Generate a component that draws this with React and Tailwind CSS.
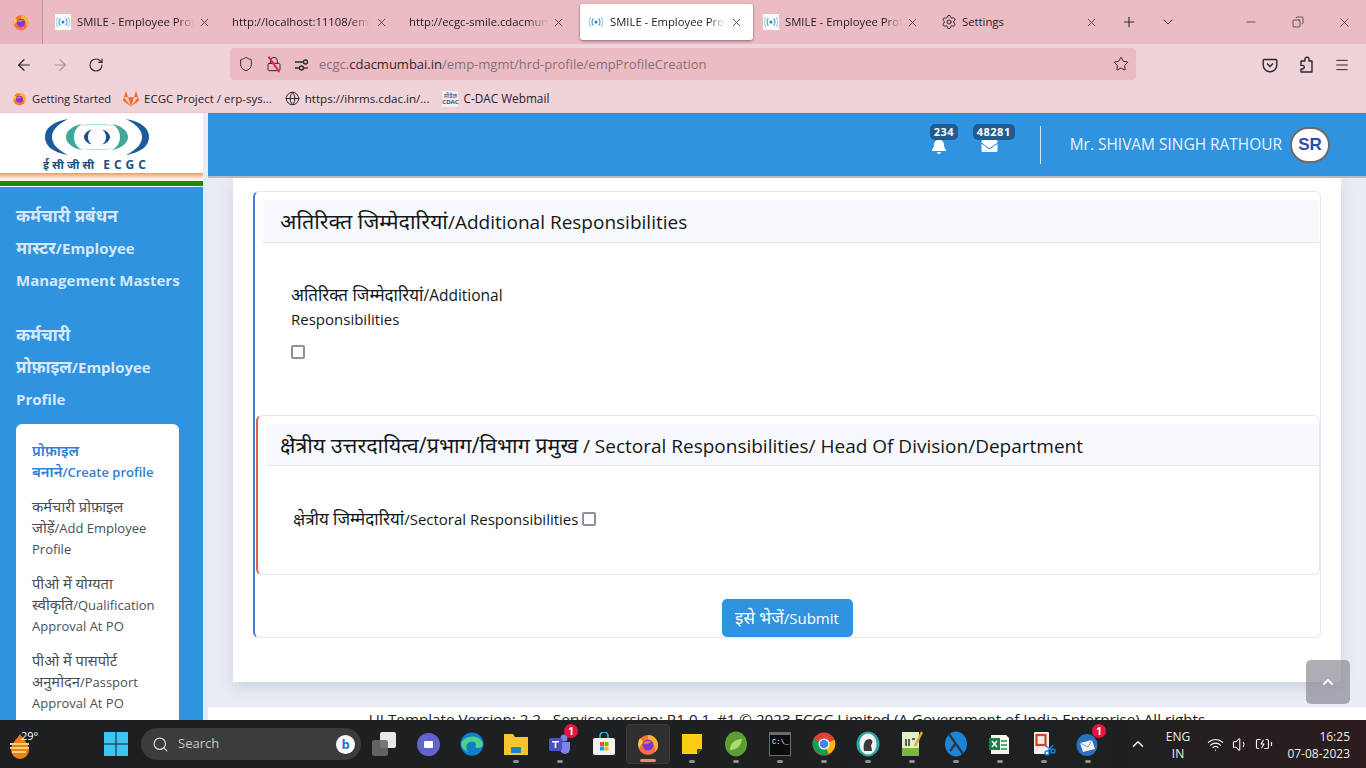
import { ArrowLeft, ArrowRight, RotateCw, Shield, Lock, Star, Menu, Settings, X, Plus, ChevronDown, Minus, Copy, Globe, Search, Wifi, Volume1, BatteryCharging, ChevronUp } from "lucide-react";
import { FaBell, FaEnvelope, FaChevronUp, FaGitlab } from "react-icons/fa";

// Devanagari runs render larger than the latin text next to them
function Hi({ children }) {
  return <span className="text-[1.13em] leading-none">{children}</span>;
}

function Favicon() {
  return (
    <svg width="16" height="16" viewBox="0 0 16 16" className="shrink-0 bg-white">
      <circle cx="8" cy="8" r="1.6" fill="#2f7fb8" />
      <path d="M5.4 4.5a5 5 0 0 0 0 7M10.6 4.5a5 5 0 0 1 0 7" fill="none" stroke="#4aa3d8" strokeWidth="1.2" />
      <path d="M3 3a8 8 0 0 0 0 10M13 3a8 8 0 0 1 0 10" fill="none" stroke="#9cc9e6" strokeWidth="1.2" />
    </svg>
  );
}

function FirefoxIcon({ size = 20 }) {
  return (
    <svg width={size} height={size} viewBox="0 0 24 24" className="shrink-0">
      <circle cx="12" cy="13" r="10" fill="#ff7139" />
      <path d="M12 3c5 0 10 4 10 10 0 3-1 5-3 7 1-6-2-11-7-12z" fill="#ffb32c" />
      <path d="M4 6c-2 3-2 7-1 10l4-6z" fill="#ffcf3d" />
      <circle cx="12" cy="13" r="5.5" fill="#7b3ad6" />
      <path d="M7 11c2-2 6-3 9-1-2 0-3 1-4 2-2 0-3 0-5-1z" fill="#ff7139" />
    </svg>
  );
}

function Tab({ title, active, favicon = true }) {
  return (
    <div className={`h-[36px] flex items-center shrink-0 ${active ? "w-[173px] ml-[2px] mr-[2px] pl-2 pr-[10px] rounded-[3px] bg-white shadow-[0_1px_3px_rgba(0,0,0,0.45)]" : "w-[177px] pl-2 pr-[13px]"}`}>
      {favicon && <Favicon />}
      <span className={`text-[11.3px] text-[#1e1b26] whitespace-nowrap overflow-hidden flex-1 [mask-image:linear-gradient(to_right,black_85%,transparent)] ${favicon ? "ml-[6px]" : ""}`}>{title}</span>
      <X className="w-[13px] h-[13px] ml-1 text-[#3a3640] shrink-0" strokeWidth={1.5} />
    </div>
  );
}

function Bookmark({ icon, label, className = "", textClass = "text-[11.2px]" }) {
  return (
    <div className={`flex items-center gap-[5px] ${className}`}>
      {icon}
      <span className={`${textClass} text-[#23202a] whitespace-nowrap`}>{label}</span>
    </div>
  );
}

function BrowserChrome() {
  return (
    <>
      <div className="h-[44px] bg-[#ecbcc4] flex items-center">
        <div className="w-[43px] h-[44px] flex items-center justify-center border-r border-[#b79aa2] bg-[#e9b4bd]">
          <FirefoxIcon size={18} />
        </div>
        <div className="w-1" />
        <Tab title="SMILE - Employee Profile" />
        <Tab title="http://localhost:11108/emp-mgmt" favicon={false} />
        <Tab title="http://ecgc-smile.cdacmumbai.in" favicon={false} />
        <Tab title="SMILE - Employee Profile" active />
        <Tab title="SMILE - Employee Profile" />
        <div className="w-[166px] flex items-center pl-[9px] shrink-0">
          <Settings className="w-4 h-4 text-[#2b2830]" strokeWidth={1.5} />
          <span className="text-[11.3px] ml-[5px] text-[#1e1b26] flex-1">Settings</span>
          <X className="w-[13px] h-[13px] text-[#3a3640]" strokeWidth={1.5} />
        </div>
        <Plus className="w-4 h-4 ml-[23px] text-[#2b2830]" strokeWidth={1.6} />
        <ChevronDown className="w-4 h-4 ml-[23px] text-[#2b2830]" strokeWidth={1.5} />
        <Minus className="w-[14px] h-[14px] ml-[68px] text-[#2b2830]" strokeWidth={1.2} />
        <Copy className="w-[12px] h-[12px] ml-[34px] -scale-x-100 text-[#2b2830]" strokeWidth={1.4} />
        <X className="w-[15px] h-[15px] ml-[33px] text-[#2b2830]" strokeWidth={1.1} />
      </div>
      <div className="h-[42px] bg-[#f0d3d9] flex items-center pl-[15px] pr-4">
        <ArrowLeft className="w-[18px] h-[18px] text-[#2b2830]" strokeWidth={1.6} />
        <ArrowRight className="w-[18px] h-[18px] ml-[18px] text-[#a8969c]" strokeWidth={1.6} />
        <RotateCw className="w-4 h-4 ml-[19px] text-[#2b2830]" strokeWidth={1.7} />
        <div className="w-[906px] h-[32px] ml-[126px] mb-[2px] bg-[#ecbcc4] rounded-[4px] flex items-center pl-[8px] pr-[7px]">
          <Shield className="w-4 h-4 text-[#2b2830]" strokeWidth={1.5} />
          <div className="relative ml-[12px]">
            <Lock className="w-4 h-4 text-[#2b2830]" strokeWidth={1.5} />
            <div className="absolute left-[7px] top-[-1px] h-[19px] w-[1.5px] bg-[#e22850] -rotate-[35deg]" />
          </div>
          <svg width="15" height="15" viewBox="0 0 15 15" className="ml-[12px]" fill="none" stroke="#2b2830" strokeWidth="1.3">
            <path d="M1 5h8M1 11h4" />
            <circle cx="11.5" cy="5" r="2" />
            <circle cx="7.5" cy="11" r="2" />
            <path d="M10 11h4" />
          </svg>
          <span className="ml-[10px] pt-[2px] text-[13px] text-[#84727a] flex-1 whitespace-nowrap">
            ecgc.<span className="text-[#2b2830]">cdacmumbai.in</span>/emp-mgmt/hrd-profile/empProfileCreation
          </span>
          <Star className="w-4 h-4 text-[#2b2830]" strokeWidth={1.5} />
        </div>
        <svg width="16" height="16" viewBox="0 0 16 16" className="ml-[126px]" fill="none" stroke="#2b2830" strokeWidth="1.4">
          <path d="M2 2.5h12a.8.8 0 0 1 .8.8V8a6.8 6.8 0 0 1-13.6 0V3.3a.8.8 0 0 1 .8-.8z" />
          <path d="M5 6.5l3 3 3-3" />
        </svg>
        <svg width="16" height="18" viewBox="0 0 16 18" className="ml-[20px]" fill="none" stroke="#2b2830" strokeWidth="1.4" strokeLinejoin="round">
          <path d="M3 5h4V3.2a2 2 0 0 1 4 0V5h3v11H3v-3h1.4a1.8 1.8 0 0 0 0-3.6H3z" />
        </svg>
        <Menu className="w-4 h-4 ml-[20px] text-[#2b2830]" strokeWidth={1.5} />
      </div>
      <div className="h-[26px] bg-[#f0d3d9] flex items-center pl-[12px]">
        <Bookmark icon={<FirefoxIcon size={15} />} label="Getting Started" />
        <Bookmark className="ml-3" textClass="text-[11.5px]" icon={<FaGitlab className="w-4 h-4 text-[#f0692b]" />} label="ECGC Project / erp-sys..." />
        <Bookmark className="ml-[13px]" textClass="text-[11.6px]" icon={<Globe className="w-[15px] h-[15px] text-[#23202a]" strokeWidth={1.5} />} label="https://ihrms.cdac.in/..." />
        <div className="flex items-center gap-[5px] ml-[13px]">
          <div className="w-4 h-4 flex flex-col items-center justify-center bg-white/60 leading-none">
            <span className="text-[6px] text-[#1f4f8f] font-['Noto_Sans',sans-serif]">सीडैक</span>
            <span className="text-[6px] font-bold text-[#1f4f8f]">CDAC</span>
          </div>
          <span className="text-[11.8px] text-[#23202a]">C-DAC Webmail</span>
        </div>
      </div>
      <div className="h-px bg-[#f3c5cf]" />
    </>
  );
}

function EcgcLogo() {
  return (
    <svg width="106" height="38" viewBox="0 0 106 40" preserveAspectRatio="none" className="shrink-0">
      <path d="M24 1C8 4 1 11 1 20s7 16 23 19C13 33 8 27 8 20S13 7 24 1z" fill="#1c5c9e" />
      <path d="M82 1c16 3 23 10 23 19s-7 16-23 19c11-6 16-12 16-19S93 7 82 1z" fill="#1c5c9e" />
      <path d="M38 6c-12 3-16 9-16 14s4 11 16 14c-6-4-8-9-8-14s2-10 8-14z" fill="#3fa79c" />
      <path d="M68 6c12 3 16 9 16 14s-4 11-16 14c6-4 8-9 8-14s-2-10-8-14z" fill="#3fa79c" />
      <path d="M36 8c8-2 26-2 34 0-8-1-26-1-34 0zM36 32c8 2 26 2 34 0-8 1-26 1-34 0z" fill="#8fd0c8" />
      <path d="M48 12c-5 1-8 5-8 8s3 7 8 8c-3-2-4-5-4-8s1-6 4-8zM58 12c5 1 8 5 8 8s-3 7-8 8c3-2 4-5 4-8s-1-6-4-8z" fill="#1c4f8c" />
    </svg>
  );
}

function NavItem({ children, active }) {
  return (
    <div className={`text-[13px] leading-[21px] mb-[14px] whitespace-nowrap ${active ? "text-[#2e7fd6] font-semibold" : "text-[#4b4f55]"}`}>
      {children}
    </div>
  );
}

function Sidebar() {
  return (
    <aside className="w-[203px] shrink-0 flex flex-col overflow-hidden bg-[#3093e0]">
      <div className="bg-white shrink-0">
        <div className="h-[60px] flex flex-col items-center pt-[5px] pr-[10px]">
          <EcgcLogo />
          <div className="text-[11.5px] leading-[15px] mt-[1px] font-bold text-[#1c4f7c] whitespace-nowrap">ई सी जी सी <span className="ml-[6px] tracking-[4px] text-[12px]">ECGC</span></div>
        </div>
        <div className="h-[7px] bg-gradient-to-b from-[#f79a3c] to-white" />
        <div className="h-[5px] mt-px bg-[#1c880f]" />
        <div className="h-[1px]" />
      </div>
      <div className="px-4 pt-[13px] text-[#d6e8fb] font-bold text-[15px] leading-[32px] whitespace-nowrap">
        <div><Hi>कर्मचारी प्रबंधन</Hi><br /><Hi>मास्टर</Hi>/Employee<br />Management Masters</div>
        <div className="mt-[23px]"><Hi>कर्मचारी</Hi><br /><Hi>प्रोफ़ाइल</Hi>/Employee<br />Profile</div>
      </div>
      <div className="mx-4 mt-[9px] w-[163px] bg-white rounded-t-[6px] pl-4 pt-[17px]">
        <NavItem active><Hi>प्रोफ़ाइल</Hi><br /><Hi>बनाने</Hi>/Create profile</NavItem>
        <NavItem><Hi>कर्मचारी प्रोफ़ाइल</Hi><br /><Hi>जोड़ें</Hi>/Add Employee<br />Profile</NavItem>
        <NavItem><Hi>पीओ में योग्यता</Hi><br /><Hi>स्वीकृति</Hi>/Qualification<br />Approval At PO</NavItem>
        <NavItem><Hi>पीओ में पासपोर्ट</Hi><br /><Hi>अनुमोदन</Hi>/Passport<br />Approval At PO</NavItem>
      </div>
    </aside>
  );
}

function Header() {
  return (
    <header className="h-[65px] shrink-0 bg-[#3093e0] border-b-2 border-[#bcbcbc] flex items-center justify-end pr-[36px]">
      <div className="relative w-4 h-4 mr-[34px] mt-[3px]">
        <FaBell className="w-[16px] h-[16px] text-white" />
        <span className="absolute -top-[14px] -left-[1px] h-4 px-[4px] rounded-[5px] bg-[#1f5c92] text-white text-[11px] leading-4 font-bold tracking-[0.5px]">234</span>
      </div>
      <div className="relative w-[17px] h-4 mr-[42px] mt-[3px]">
        <FaEnvelope className="w-[17px] h-[16px] text-white" />
        <span className="absolute -top-[14px] -left-[8px] h-4 px-[4px] rounded-[5px] bg-[#1f5c92] text-white text-[11px] leading-4 font-bold tracking-[0.5px]">48281</span>
      </div>
      <div className="w-px h-[38px] bg-[#d5e7f8] mr-[29px]" />
      <span className="text-[#e8f3fd] text-[15.45px] whitespace-nowrap">Mr. SHIVAM SINGH RATHOUR</span>
      <div className="w-10 h-9 ml-2 rounded-full bg-white border-2 border-[#6b6b6b] flex items-center justify-center text-[17px] font-bold text-[#2b4cb0] font-['Liberation_Sans',sans-serif]">SR</div>
    </header>
  );
}

function Checkbox({ className = "" }) {
  return <div className={`w-[14px] h-[14px] rounded-[2px] border-2 border-[#8f8f9d] bg-white shrink-0 ${className}`} />;
}

function Content() {
  return (
    <div className="flex-1 min-h-0 bg-[#e9ecf5] px-[25px] flex flex-col">
      <div className="h-[504px] shrink-0 bg-white pt-[13px] px-5 shadow-[0_6px_12px_rgba(130,140,170,0.25)] text-[#14171a]">
        <div className="h-[447px] rounded-[6px] border border-[#e6e6f2] border-l-2 border-l-[#4d79e0] pt-2 pl-[8px] pr-px">
          <div className="h-[43px] bg-[#f8f9fc] border-b border-[#e6e6f2] rounded-t-[4px] pl-[17px] text-[19px] leading-[45px]"><Hi>अतिरिक्त जिम्मेदारियां</Hi>/Additional Responsibilities</div>
          <div className="pl-[28px] pt-[40px] h-[172px]">
            <div className="text-[15px] leading-[24px] whitespace-nowrap"><Hi>अतिरिक्त जिम्मेदारियां</Hi><span className="text-[15.5px]">/Additional</span><br />Responsibilities</div>
            <Checkbox className="mt-[14px]" />
          </div>
          <div className="h-[160px] w-[1064px] -translate-x-[7px] rounded-[6px] border border-[#e6e6f2] border-l-2 border-l-[#e85a50] pt-2 pl-2">
            <div className="h-[42px] bg-[#f8f9fc] border-b border-[#e6e6f2] rounded-t-[4px] pl-[14px] text-[19px] leading-[44px] whitespace-nowrap"><Hi>क्षेत्रीय उत्तरदायित्व/प्रभाग/विभाग प्रमुख</Hi> / Sectoral Responsibilities/ Head Of Division/Department</div>
            <div className="pl-[27px] pt-[42px] flex items-center text-[15px]">
              <span className="whitespace-nowrap"><Hi>क्षेत्रीय जिम्मेदारियां</Hi>/Sectoral Responsibilities</span>
              <Checkbox className="ml-[4px]" />
            </div>
          </div>
          <div className="flex justify-center pt-6 -translate-x-[4px]">
            <button className="h-[38px] w-[131px] rounded-[5px] bg-[#3093e0] text-white text-[15px]"><Hi>इसे भेजें</Hi>/Submit</button>
          </div>
        </div>
      </div>
      <div className="h-[25px] shrink-0" />
      <div className="-mx-[25px] bg-white text-[15.2px] text-center text-[#222] whitespace-nowrap pt-px overflow-hidden">UI Template Version: 2.2 , Service version: R1.0.1_#1 © 2023 ECGC Limited (A Government of India Enterprise) All rights</div>
    </div>
  );
}

function TaskIcon({ children, dot, active }) {
  return (
    <div className={`w-[44px] h-[40px] shrink-0 flex items-center justify-center relative ${active ? "bg-[#2f2f2f] rounded-[4px] border border-[#3a3a3a]" : ""}`}>
      {children}
      {dot && <div className="absolute bottom-[1px] left-1/2 -translate-x-1/2 w-[6px] h-[3px] rounded-full bg-[#8f8f8f]" />}
      {active && <div className="absolute bottom-[1px] left-1/2 -translate-x-1/2 w-[16px] h-[3px] rounded-full bg-[#f08a70]" />}
    </div>
  );
}

function Badge({ value }) {
  return <span className="absolute top-0 right-[4px] w-[14px] h-[14px] rounded-full bg-[#e3173e] text-white text-[10px] leading-[14px] text-center font-bold">{value}</span>;
}

function Taskbar() {
  return (
    <footer className="h-[48px] shrink-0 bg-gradient-to-r from-[#1d1f21] via-[#1f2021] via-80% to-[#2b1c1e] flex items-center relative">
      <div className="w-[42px] h-full relative shrink-0">
        <svg width="22" height="26" viewBox="0 0 22 26" className="absolute left-[9px] top-[14px]">
          <path d="M11 0c2 4 9 9 9 16a9 9 0 0 1-18 0C2 9 9 4 11 0z" fill="#e8801e" />
          <path d="M1 10h19M1 14h19M3 18h14" stroke="#f5d27a" strokeWidth="2" />
        </svg>
        <span className="absolute left-[21px] top-[8px] text-[11px] text-white">29°</span>
      </div>
      <svg width="24" height="24" viewBox="0 0 24 24" className="ml-[62px] shrink-0">
        <path d="M0 0h11.5v11.5H0zM12.5 0H24v11.5H12.5zM0 12.5h11.5V24H0zM12.5 12.5H24V24H12.5z" fill="#3cc4f5" />
      </svg>
      <div className="w-[220px] h-[32px] ml-[13px] rounded-full bg-[#3c3c3c] flex items-center pl-[11px] pr-[6px] shrink-0">
        <Search className="w-[17px] h-[17px] text-[#d8d8d8]" strokeWidth={1.7} />
        <span className="ml-[9px] text-[13px] text-[#c8c8c8] flex-1">Search</span>
        <span className="w-[19px] h-[19px] rounded-full bg-white flex items-center justify-center text-[#1678d4] text-[13px] font-bold leading-none">b</span>
      </div>
      <div className="flex items-center ml-px">
        <TaskIcon>
          <div className="relative w-6 h-6">
            <div className="absolute right-0 top-0 w-4 h-4 rounded-[2px] bg-[#e8e8e8]" />
            <div className="absolute left-0 bottom-0 w-4 h-4 rounded-[2px] bg-[#6a6a6a]/90" />
          </div>
        </TaskIcon>
        <TaskIcon>
          <div className="w-[23px] h-[23px] rounded-full bg-[#6264c8] flex items-center justify-center">
            <div className="w-[9px] h-[7px] rounded-[1px] bg-white" />
          </div>
        </TaskIcon>
        <TaskIcon>
          <svg width="24" height="24" viewBox="0 0 24 24">
            <circle cx="12" cy="12" r="11.5" fill="#0f7fcc" />
            <path d="M1 12C3 3 20 1 23 12c0 4-5 5-8 3 3-3-1-7-5-5-4 1-5 6-2 10C4 18 1 15 1 12z" fill="#4fd08c" />
          </svg>
        </TaskIcon>
        <TaskIcon dot>
          <svg width="24" height="24" viewBox="0 0 24 24">
            <path d="M0 2h9l2 3h13v18H0z" fill="#f5c631" />
            <rect x="7" y="15" width="10" height="6" rx="1" fill="#1a83c9" />
          </svg>
        </TaskIcon>
        <TaskIcon dot>
          <svg width="24" height="24" viewBox="0 0 24 24">
            <circle cx="16" cy="6" r="3.5" fill="#7b83eb" />
            <path d="M11 10h11v7a5 5 0 0 1-10 0z" fill="#7b83eb" />
            <rect x="1" y="6" width="13" height="13" rx="2" fill="#4b53bc" />
            <path d="M4 9h7v1.6H8.3V16H6.7v-5.4H4z" fill="#fff" />
          </svg>
          <Badge value="1" />
        </TaskIcon>
        <TaskIcon>
          <svg width="24" height="24" viewBox="0 0 24 24">
            <path d="M8 7V4a4 4 0 0 1 8 0v3" fill="none" stroke="#2ab4d9" strokeWidth="1.6" />
            <rect x="1" y="6" width="22" height="17" rx="2" fill="#f2f2f2" />
            <path d="M8 10h4v4H8z" fill="#e8512d" /><path d="M12.5 10h4v4h-4z" fill="#7fba00" /><path d="M8 14.5h4v4H8z" fill="#00a4ef" /><path d="M12.5 14.5h4v4h-4z" fill="#ffb900" />
          </svg>
        </TaskIcon>
        <TaskIcon active><FirefoxIcon size={24} /></TaskIcon>
        <TaskIcon dot>
          <svg width="24" height="24" viewBox="0 0 24 24">
            <path d="M2 2h20v15l-5 5H2z" fill="#ffcc16" /><path d="M22 17h-5v5z" fill="#3b3b3b" />
          </svg>
        </TaskIcon>
        <TaskIcon dot>
          <svg width="24" height="26" viewBox="0 0 24 26">
            <ellipse cx="12" cy="13" rx="11" ry="12.5" fill="#5d9e32" />
            <path d="M6 19c0-7 5-11 12-11-1 7-5 11-12 11z" fill="#a8dc72" />
          </svg>
        </TaskIcon>
        <TaskIcon dot>
          <div className="w-[22px] h-[24px] bg-[#0c0c0c] border border-[#6c6c6c] border-t-[3px] flex items-start pl-[2px] pt-[4px] text-[7px] leading-none text-white font-['Liberation_Mono',monospace]">C:\_</div>
        </TaskIcon>
        <TaskIcon dot>
          <svg width="24" height="24" viewBox="0 0 24 24">
            <circle cx="12" cy="12" r="11.5" fill="#db4437" />
            <path d="M12 12L22.5 8a11.5 11.5 0 0 1-6 14z" fill="#fbbc05" />
            <path d="M12 12l4.5 10A11.5 11.5 0 0 1 1.5 7z" fill="#0f9d58" />
            <circle cx="12" cy="12" r="5.5" fill="#fff" /><circle cx="12" cy="12" r="4.3" fill="#4285f4" />
          </svg>
        </TaskIcon>
        <TaskIcon dot>
          <svg width="24" height="26" viewBox="0 0 24 26">
            <ellipse cx="12" cy="13" rx="11.5" ry="12.5" fill="#2ba7a7" /><ellipse cx="12" cy="13" rx="8.5" ry="10.5" fill="#f4f4f4" />
            <path d="M8 20c-1-6 0-12 6-12 3 1 3 4 1 6l1 6z" fill="#3a3a3a" />
          </svg>
        </TaskIcon>
        <TaskIcon dot>
          <svg width="24" height="26" viewBox="0 0 24 26">
            <path d="M2 1h17v24H2z" fill="#dff0c8" /><path d="M2 17h17v8H2z" fill="#7db73c" />
            <path d="M6 8v7M9 8v7M12 8h3" stroke="#333" strokeWidth="1.5" /><path d="M22 1l-7 14" stroke="#e0a82e" strokeWidth="2.5" />
          </svg>
        </TaskIcon>
        <TaskIcon dot>
          <svg width="24" height="26" viewBox="0 0 24 26">
            <ellipse cx="12" cy="13" rx="11" ry="12.5" fill="#1d84d6" />
            <path d="M5 3l14 20M12 12L6 20" stroke="#2a3442" strokeWidth="2.2" />
          </svg>
        </TaskIcon>
        <TaskIcon dot>
          <svg width="24" height="24" viewBox="0 0 24 24">
            <path d="M3 3h15l3 3v16H3z" fill="#f3f7ee" /><path d="M1 6h11v12H1z" fill="#1d7f45" />
            <path d="M4 9l5 6M9 9l-5 6" stroke="#fff" strokeWidth="1.4" /><path d="M13 9h6M13 13h6M13 17h6" stroke="#5aa873" strokeWidth="2" />
          </svg>
        </TaskIcon>
        <TaskIcon dot>
          <svg width="24" height="26" viewBox="0 0 24 26">
            <rect x="2" y="1" width="15" height="22" rx="1" fill="#f0f0f0" /><rect x="4.5" y="4" width="9" height="10" fill="none" stroke="#d93f1e" strokeWidth="2.2" />
            <circle cx="15" cy="22" r="2" fill="none" stroke="#1e88d6" strokeWidth="1.4" /><circle cx="21" cy="20" r="2" fill="none" stroke="#1e88d6" strokeWidth="1.4" /><path d="M12 14l8 5M21 14l-5 6" stroke="#1e88d6" strokeWidth="1.2" />
          </svg>
        </TaskIcon>
        <TaskIcon dot>
          <svg width="24" height="26" viewBox="0 0 24 26">
            <ellipse cx="11" cy="14" rx="10.5" ry="11" fill="#2a6fc0" /><path d="M4 12l12-3 3 9-12 3z" fill="#f2f2f2" /><path d="M4 12l8 4 4-7" fill="none" stroke="#8aa0b8" />
          </svg>
          <Badge value="1" />
        </TaskIcon>
      </div>
      <ChevronUp className="w-[18px] h-[18px] ml-[19px] text-[#f0f0f0]" strokeWidth={2} />
      <div className="w-[30px] ml-[16px] mt-[2px] text-center text-[12px] leading-[17px] text-[#eeeeee] shrink-0">ENG<br />IN</div>
      <Wifi className="w-[17px] h-[17px] ml-[14px] text-white" strokeWidth={1.6} />
      <Volume1 className="w-[17px] h-[17px] ml-[8px] text-white" strokeWidth={1.5} />
      <BatteryCharging className="w-[18px] h-[18px] ml-[6px] text-white" strokeWidth={1.5} />
      <div className="ml-auto pr-4 mt-[2px] text-right text-[12px] leading-[17px] text-[#eeeeee]">16:25<br />07-08-2023</div>
    </footer>
  );
}

export default function App() {
  return (
    <div className="w-[1366px] h-[768px] overflow-hidden flex flex-col relative bg-white font-['Open_Sans','Noto_Sans','Noto_Sans_Devanagari',sans-serif]">
      <BrowserChrome />
      <div className="flex-1 min-h-0 flex bg-[#e9ecf5]">
        <Sidebar />
        <div className="w-[5px] shrink-0" />
        <main className="flex-1 min-w-0 flex flex-col">
          <Header />
          <Content />
        </main>
      </div>
      <Taskbar />
      <button className="absolute left-[1306px] top-[660px] w-[44px] h-[44px] rounded-[5px] bg-[#8a8a96]/70 flex items-center justify-center">
        <FaChevronUp className="w-[12px] h-[12px] text-white" />
      </button>
    </div>
  );
}
